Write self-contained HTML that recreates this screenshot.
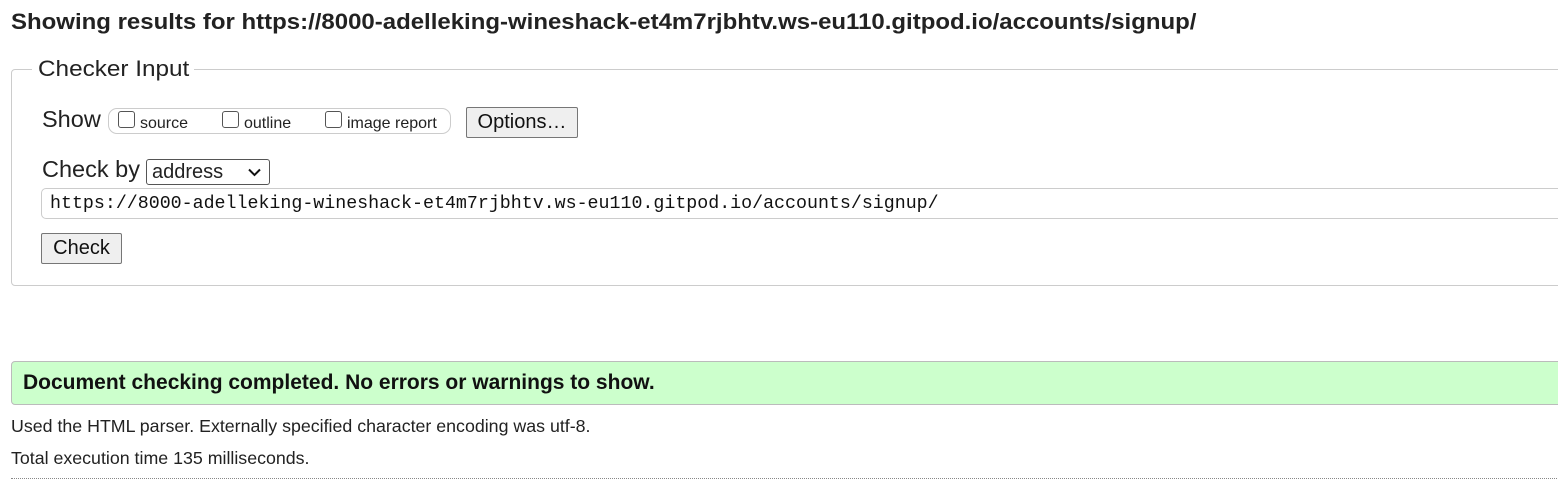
<!DOCTYPE html>
<html><head><meta charset="utf-8"><style>
body{margin:0;width:1558px;height:480px;overflow:hidden;background:#fff;font-family:"Liberation Sans",Arial,sans-serif;color:#222;position:relative}
.a{position:absolute;white-space:nowrap}
.sx{transform-origin:left center}
h2{position:absolute;left:11px;top:9px;margin:0;font-size:22px;font-weight:bold;color:#222;white-space:nowrap;transform:scaleX(1.09);transform-origin:left center}
.fs{position:absolute;left:11px;top:69px;width:1600px;height:215px;border:1px solid #ccc;border-radius:4px}
.lg{position:absolute;left:32px;top:56px;background:#fff;padding:0 6px;font-size:22.5px;color:#222}
.cb{display:inline-block;width:15px;height:15px;border:1px solid #555;border-radius:3px;vertical-align:0px;margin-right:5px;background:#fff}
.btn{position:absolute;background:#efefef;border:1px solid #767676;border-radius:2px;box-sizing:border-box;font-size:20px;text-align:center;color:#111}
</style></head><body>
<h2>Showing results for https://8000-adelleking-wineshack-et4m7rjbhtv.ws-eu110.gitpod.io/accounts/signup/</h2>
<div class="fs"></div>
<div class="a lg" style="width:150px"><span class="sx" style="display:inline-block;transform:scaleX(1.08)">Checker Input</span></div>
<div class="a" style="left:42px;top:106px;font-size:23.5px">Show</div>
<div class="a" style="left:108px;top:108px;width:343px;height:26px;border:1px solid #ccc;border-radius:9px;box-sizing:border-box"></div>
<div class="a" style="left:118px;top:111px;font-size:16px"><span class="cb"></span>source</div>
<div class="a" style="left:222px;top:111px;font-size:16px"><span class="cb"></span>outline</div>
<div class="a" style="left:325px;top:111px;font-size:16px"><span class="cb"></span>image report</div>
<div class="btn" style="left:466px;top:107px;width:112px;height:31px;line-height:28px">Options…</div>
<div class="a" style="left:42px;top:156px;font-size:23.5px">Check by</div>
<div class="a" style="left:146px;top:159px;width:124px;height:26px;border:1px solid #555;border-radius:3px;box-sizing:border-box;font-size:20px;padding-left:5px;line-height:24px">address
<svg style="position:absolute;right:8px;top:8px" width="13" height="9" viewBox="0 0 13 9"><path d="M1 1.5l5.5 5.5 5.5-5.5" fill="none" stroke="#111" stroke-width="2"/></svg></div>
<div class="a" style="left:41px;top:188px;width:1600px;height:31px;border:1px solid #ccc;border-radius:5px;box-sizing:border-box;font-family:'Liberation Mono',monospace;font-size:18.3px;line-height:31px;padding-left:8px;color:#111">https://8000-adelleking-wineshack-et4m7rjbhtv.ws-eu110.gitpod.io/accounts/signup/</div>
<div class="btn" style="left:41px;top:233px;width:81px;height:31px;line-height:29px">Check</div>
<div class="a" style="left:11px;top:361px;width:1600px;height:44px;background:#ccffcc;border:1px solid #bbb;border-radius:4px;box-sizing:border-box"></div>
<div class="a" style="left:23px;top:371px;font-size:21px;font-weight:bold;color:#111">Document checking completed. No errors or warnings to show.</div>
<div class="a" style="left:11px;top:416px;font-size:17.8px">Used the HTML parser. Externally specified character encoding was utf-8.</div>
<div class="a" style="left:11px;top:448px;font-size:17.8px">Total execution time 135 milliseconds.</div>
<div class="a" style="left:11px;top:478px;width:1600px;border-top:1px dotted #888"></div>
</body></html>
